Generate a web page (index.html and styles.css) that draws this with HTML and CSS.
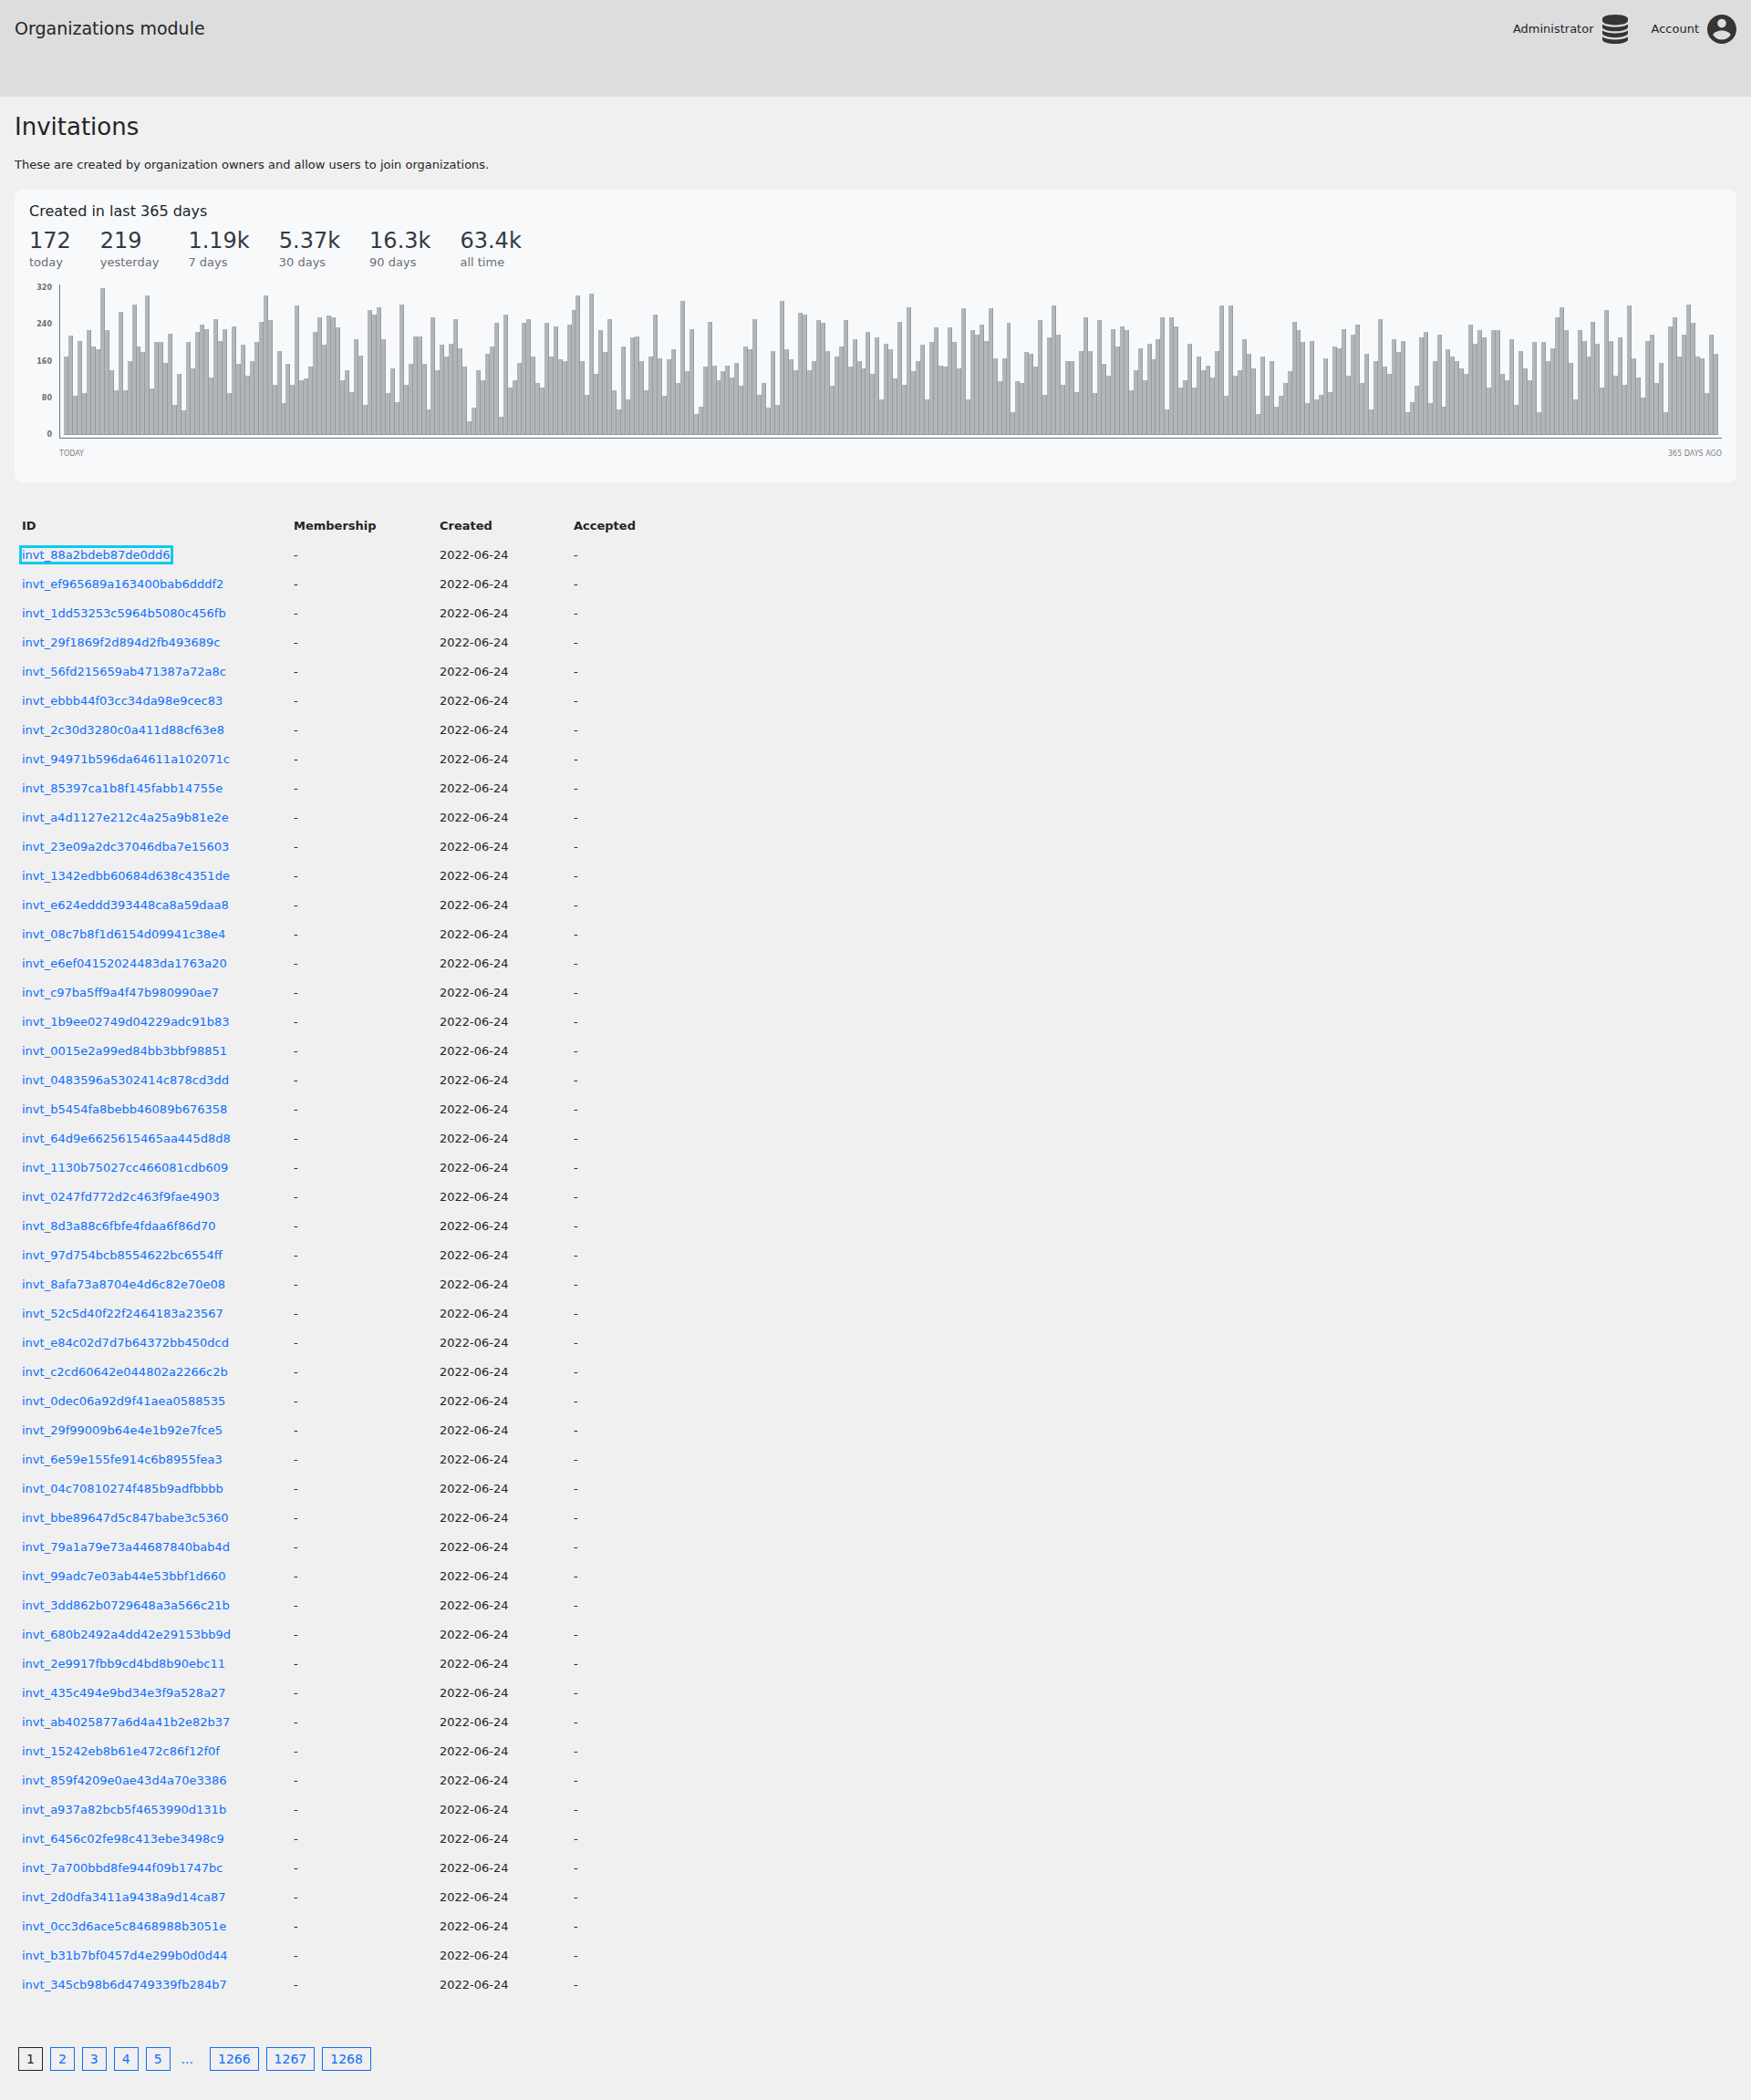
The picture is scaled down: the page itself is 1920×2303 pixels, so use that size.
FILE: index.html
```
<!DOCTYPE html>
<html lang="en">
<head>
<meta charset="utf-8">
<meta name="viewport" content="width=device-width, initial-scale=1">
<title>Invitations</title>
<link rel="stylesheet" href="styles.css">
</head>
<body>
<header class="topbar">
  <a class="topbar-title" href="#">Organizations module</a>
  <nav class="topbar-menus">
    <button class="menu-button" type="button">Administrator
      <svg class="icon icon-database" viewBox="0 0 1536 1792" preserveAspectRatio="none" aria-hidden="true"><path d="M768 768q237 0 443-43t325-127v170q0 69-103 128t-280 93.5-385 34.5-385-34.5-280-93.5-103-128v-170q119 84 325 127t443 43zm0 768q237 0 443-43t325-127v170q0 69-103 128t-280 93.5-385 34.5-385-34.5-280-93.5-103-128v-170q119 84 325 127t443 43zm0-384q237 0 443-43t325-127v170q0 69-103 128t-280 93.5-385 34.5-385-34.5-280-93.5-103-128v-170q119 84 325 127t443 43zm0-1152q208 0 385 34.5t280 93.5 103 128v128q0 69-103 128t-280 93.5-385 34.5-385-34.5-280-93.5-103-128v-128q0-69 103-128t280-93.5 385-34.5z"/></svg>
    </button>
    <button class="menu-button" type="button">Account
      <svg class="icon icon-account" viewBox="2 2 20 20" aria-hidden="true"><path d="M12,19.2C9.5,19.2 7.29,17.92 6,16C6.03,14 10,12.9 12,12.9C14,12.9 17.97,14 18,16C16.71,17.92 14.5,19.2 12,19.2M12,5A3,3 0 0,1 15,8A3,3 0 0,1 12,11A3,3 0 0,1 9,8A3,3 0 0,1 12,5M12,2A10,10 0 0,0 2,12A10,10 0 0,0 12,22A10,10 0 0,0 22,12C22,6.47 17.5,2 12,2Z"/></svg>
    </button>
  </nav>
</header>
<main class="content">
  <h1 class="page-title">Invitations</h1>
  <p class="intro">These are created by organization owners and allow users to join organizations.</p>

  <section class="card">
    <h2 class="card-title">Created in last 365 days</h2>
    <dl class="stats">
      <div class="stat"><dt>today</dt><dd>172</dd></div>
      <div class="stat"><dt>yesterday</dt><dd>219</dd></div>
      <div class="stat"><dt>7 days</dt><dd>1.19k</dd></div>
      <div class="stat"><dt>30 days</dt><dd>5.37k</dd></div>
      <div class="stat"><dt>90 days</dt><dd>16.3k</dd></div>
      <div class="stat"><dt>all time</dt><dd>63.4k</dd></div>
    </dl>
    <div class="chart">
      <div class="scale"><span>320</span><span>240</span><span>160</span><span>80</span><span>0</span></div>
      <div class="plot" id="plot"></div>
      <div class="range"><span>TODAY</span><span>365 DAYS AGO</span></div>
    </div>
  </section>

  <table class="records">
    <colgroup><col class="col-id"><col class="col-membership"><col class="col-created"><col class="col-accepted"></colgroup>
    <thead><tr><th scope="col">ID</th><th scope="col">Membership</th><th scope="col">Created</th><th scope="col">Accepted</th></tr></thead>
    <tbody id="records"></tbody>
  </table>

  <nav class="pages" aria-label="Pages">
    <a class="page current" href="#" aria-current="page">1</a>
    <a class="page" href="#">2</a>
    <a class="page" href="#">3</a>
    <a class="page" href="#">4</a>
    <a class="page" href="#">5</a>
    <span class="gap">...</span>
    <a class="page" href="#">1266</a>
    <a class="page" href="#">1267</a>
    <a class="page" href="#">1268</a>
  </nav>
</main>
<script src="page.js"></script>
</body>
</html>
```
FILE: styles.css
```
* { box-sizing: border-box; }

body {
  margin: 0;
  background: #f0f0f0;
  color: #212529;
  font: 13px/16px "DejaVu Sans", sans-serif;
}

a { color: #0d6efd; text-decoration: none; }

.topbar {
  display: flex;
  justify-content: space-between;
  align-items: flex-start;
  min-height: 106px;
  padding: 16px;
  background: #ddd;
}

.topbar-title { color: inherit; font-size: 19px; line-height: 30px; }

.topbar-menus { display: flex; gap: 26px; }

.menu-button {
  display: flex;
  align-items: center;
  gap: 9px;
  padding: 0;
  border: 0;
  background: none;
  color: inherit;
  font: inherit;
}

.icon { height: 32px; fill: #353535; }
.icon-database { width: 28px; }
.icon-account { width: 32px; }

.content { padding: 16px; }

.page-title { margin: 0 0 17px; font-size: 26px; line-height: 34px; font-weight: 400; }

.intro { margin: 0 0 19px; }

.card {
  padding: 16px;
  border-radius: 8px;
  background: #f8f9fb;
}

.card-title { margin: 0 0 8px; font-size: 16px; line-height: 16px; font-weight: 400; }

.stats { display: flex; gap: 32px; margin: 0 0 16px; }

.stat { display: flex; flex-direction: column-reverse; }
.stat dt { color: #6c6f73; line-height: 16px; }
.stat dd { margin: 0; color: #343a40; font-size: 24px; line-height: 32px; }

.chart {
  display: grid;
  grid-template-columns: 25px 1fr;
  column-gap: 8px;
  margin-bottom: 10px;
}

.scale {
  display: flex;
  flex-direction: column;
  justify-content: space-between;
  align-items: flex-end;
  color: #6c6f73;
  font-size: 8px;
  line-height: 8px;
  font-weight: 700;
}

.plot {
  display: flex;
  align-items: flex-end;
  height: 169px;
  padding: 4px 2px 3px 4px;
  border: solid #6c757d;
  border-width: 0 0 1px 1px;
}

.bar {
  flex: 1 1 0;
  min-width: 0;
  border: solid #959b9f;
  border-width: 0 1px 1px 0;
  background: #b1b6ba;
}

.range {
  grid-column: 2;
  display: flex;
  justify-content: space-between;
  padding-top: 12px;
  color: #808285;
  font-size: 8px;
  line-height: 10px;
}

.records {
  margin: 32px 0 48px;
  border-collapse: collapse;
  table-layout: fixed;
  width: 736px;
  max-width: 100%;
}

.col-id { width: 298px; }
.col-membership { width: 160px; }
.col-created { width: 147px; }

.records th, .records td { padding: 8px; text-align: left; }

.selected { outline: 3px solid #0dcaf0; }

.pages { display: flex; align-items: center; gap: 8px; padding: 4px; }

.page, .gap { font-size: 14px; line-height: 24px; }
.page { padding: 0 8px; border: 1px solid #0d6efd; }
.current { border-color: #212529; color: #212529; }
.gap { padding: 0 10px 0 4px; color: #0d6efd; }
```
FILE: page.js
```
const counts = [
  172,219,86,206,92,230,194,188,322,230,142,98,270,98,162,286,194,182,306,102,
  204,204,158,222,66,134,54,204,146,226,242,232,126,254,206,232,92,238,156,198,
  130,162,204,248,306,252,110,184,70,156,110,284,120,124,150,226,258,198,262,258,
  236,120,142,94,210,174,66,274,264,280,210,92,146,72,286,110,156,216,216,156,
  56,258,142,198,172,200,254,190,150,30,60,142,120,178,194,246,40,264,104,120,
  158,246,254,172,114,104,246,172,238,166,162,242,274,306,162,88,310,134,230,182,
  254,98,56,194,78,214,216,162,98,172,264,168,86,166,188,114,294,140,232,46,
  62,150,248,152,120,140,152,126,158,108,194,188,254,88,114,60,184,66,294,188,
  166,142,268,264,142,162,252,246,184,108,172,194,252,150,210,162,146,226,134,214,
  78,200,188,124,248,110,280,140,162,198,78,204,236,152,150,236,204,146,278,78,
  230,220,242,206,278,168,118,168,246,50,118,114,182,178,150,252,88,214,284,220,
  110,162,162,94,184,258,184,92,252,156,130,232,194,238,230,98,142,190,120,200,
  166,210,258,56,258,238,104,120,200,104,172,142,152,126,184,284,86,284,130,142,
  210,178,146,46,172,86,162,62,86,114,140,248,230,204,70,206,78,88,168,94,
  194,190,232,130,220,242,114,178,56,162,254,150,134,210,182,206,50,72,108,214,
  226,70,162,220,62,188,172,162,146,134,242,200,230,214,104,230,230,134,120,210,
  66,184,146,120,204,50,204,162,190,258,280,230,158,78,230,206,172,248,200,104,
  274,206,130,214,110,284,168,126,82,206,220,114,158,50,238,258,172,220,286,246,
  172,168,92,220,178
];

const invitations = [
  "88a2bdeb87de0dd6", "ef965689a163400bab6dddf2", "1dd53253c5964b5080c456fb", "29f1869f2d894d2fb493689c",
  "56fd215659ab471387a72a8c", "ebbb44f03cc34da98e9cec83", "2c30d3280c0a411d88cf63e8", "94971b596da64611a102071c",
  "85397ca1b8f145fabb14755e", "a4d1127e212c4a25a9b81e2e", "23e09a2dc37046dba7e15603", "1342edbb60684d638c4351de",
  "e624eddd393448ca8a59daa8", "08c7b8f1d6154d09941c38e4", "e6ef04152024483da1763a20", "c97ba5ff9a4f47b980990ae7",
  "1b9ee02749d04229adc91b83", "0015e2a99ed84bb3bbf98851", "0483596a5302414c878cd3dd", "b5454fa8bebb46089b676358",
  "64d9e6625615465aa445d8d8", "1130b75027cc466081cdb609", "0247fd772d2c463f9fae4903", "8d3a88c6fbfe4fdaa6f86d70",
  "97d754bcb8554622bc6554ff", "8afa73a8704e4d6c82e70e08", "52c5d40f22f2464183a23567", "e84c02d7d7b64372bb450dcd",
  "c2cd60642e044802a2266c2b", "0dec06a92d9f41aea0588535", "29f99009b64e4e1b92e7fce5", "6e59e155fe914c6b8955fea3",
  "04c70810274f485b9adfbbbb", "bbe89647d5c847babe3c5360", "79a1a79e73a44687840bab4d", "99adc7e03ab44e53bbf1d660",
  "3dd862b0729648a3a566c21b", "680b2492a4dd42e29153bb9d", "2e9917fbb9cd4bd8b90ebc11", "435c494e9bd34e3f9a528a27",
  "ab4025877a6d4a41b2e82b37", "15242eb8b61e472c86f12f0f", "859f4209e0ae43d4a70e3386", "a937a82bcb5f4653990d131b",
  "6456c02fe98c413ebe3498c9", "7a700bbd8fe944f09b1747bc", "2d0dfa3411a9438a9d14ca87", "0cc3d6ace5c8468988b3051e",
  "b31b7bf0457d4e299b0d0d44", "345cb98b6d4749339fb284b7"
];

const peak = Math.max(...counts);
const plot = document.getElementById("plot");
for (const count of counts) {
  const bar = document.createElement("div");
  bar.className = "bar";
  bar.style.height = `${(count / peak) * 100}%`;
  plot.append(bar);
}

const records = document.getElementById("records");
invitations.forEach((id, index) => {
  const row = records.insertRow();
  const link = document.createElement("a");
  link.href = "#";
  link.textContent = `invt_${id}`;
  if (index === 0) link.className = "selected";
  row.insertCell().append(link);
  for (const text of ["-", "2022-06-24", "-"]) row.insertCell().textContent = text;
});
```
